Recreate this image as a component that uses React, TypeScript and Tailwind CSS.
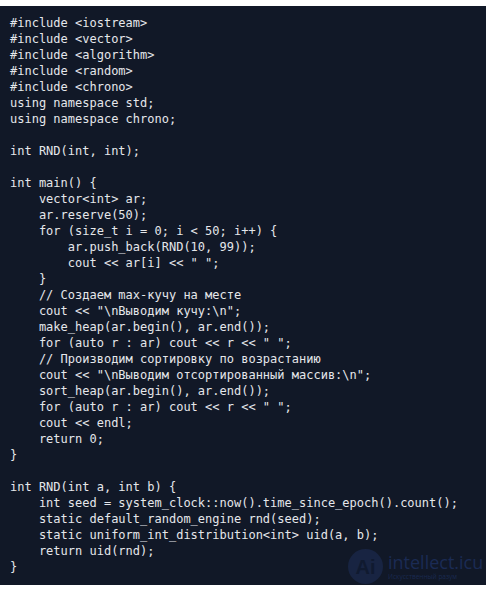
const code = `#include <iostream>
#include <vector>
#include <algorithm>
#include <random>
#include <chrono>
using namespace std;
using namespace chrono;

int RND(int, int);

int main() {
    vector<int> ar;
    ar.reserve(50);
    for (size_t i = 0; i < 50; i++) {
        ar.push_back(RND(10, 99));
        cout << ar[i] << " ";
    }
    // Создаем max-кучу на месте
    cout << "\\nВыводим кучу:\\n";
    make_heap(ar.begin(), ar.end());
    for (auto r : ar) cout << r << " ";
    // Производим сортировку по возрастанию
    cout << "\\nВыводим отсортированный массив:\\n";
    sort_heap(ar.begin(), ar.end());
    for (auto r : ar) cout << r << " ";
    cout << endl;
    return 0;
}

int RND(int a, int b) {
    int seed = system_clock::now().time_since_epoch().count();
    static default_random_engine rnd(seed);
    static uniform_int_distribution<int> uid(a, b);
    return uid(rnd);
}`;

// faint site watermark in the bottom-right corner
function Watermark() {
  return (
    <div className="absolute left-[348px] top-[543px] flex items-center gap-[5px] pointer-events-none">
      <div className="w-[35px] h-[35px] rounded-full bg-[#182442] flex items-center justify-center">
        <span className="text-[20px] leading-none font-bold text-[#101a30] font-['Liberation_Sans',sans-serif]">
          Ai
        </span>
      </div>
      <div className="flex flex-col font-['Open_Sans','Liberation_Sans',sans-serif]">
        <span className="text-[18px] leading-[19px] text-[#1b2b54]">intellect.icu</span>
        <span className="text-[6.5px] leading-[9px] text-[#1a2a50]">Искусственный разум</span>
      </div>
    </div>
  );
}

export default function App() {
  return (
    <div className="w-[486px] h-[589px] bg-white pt-[6px]">
      <div className="relative bg-[#111827] h-[579px] pl-[10px] pt-[9px] pb-[10px] overflow-hidden">
        <pre className="m-0 whitespace-pre text-[12px] leading-[16px] text-[#e5e7eb] font-['DejaVu_Sans_Mono','Liberation_Mono',monospace]">
          {code}
        </pre>
        <Watermark />
      </div>
    </div>
  );
}
